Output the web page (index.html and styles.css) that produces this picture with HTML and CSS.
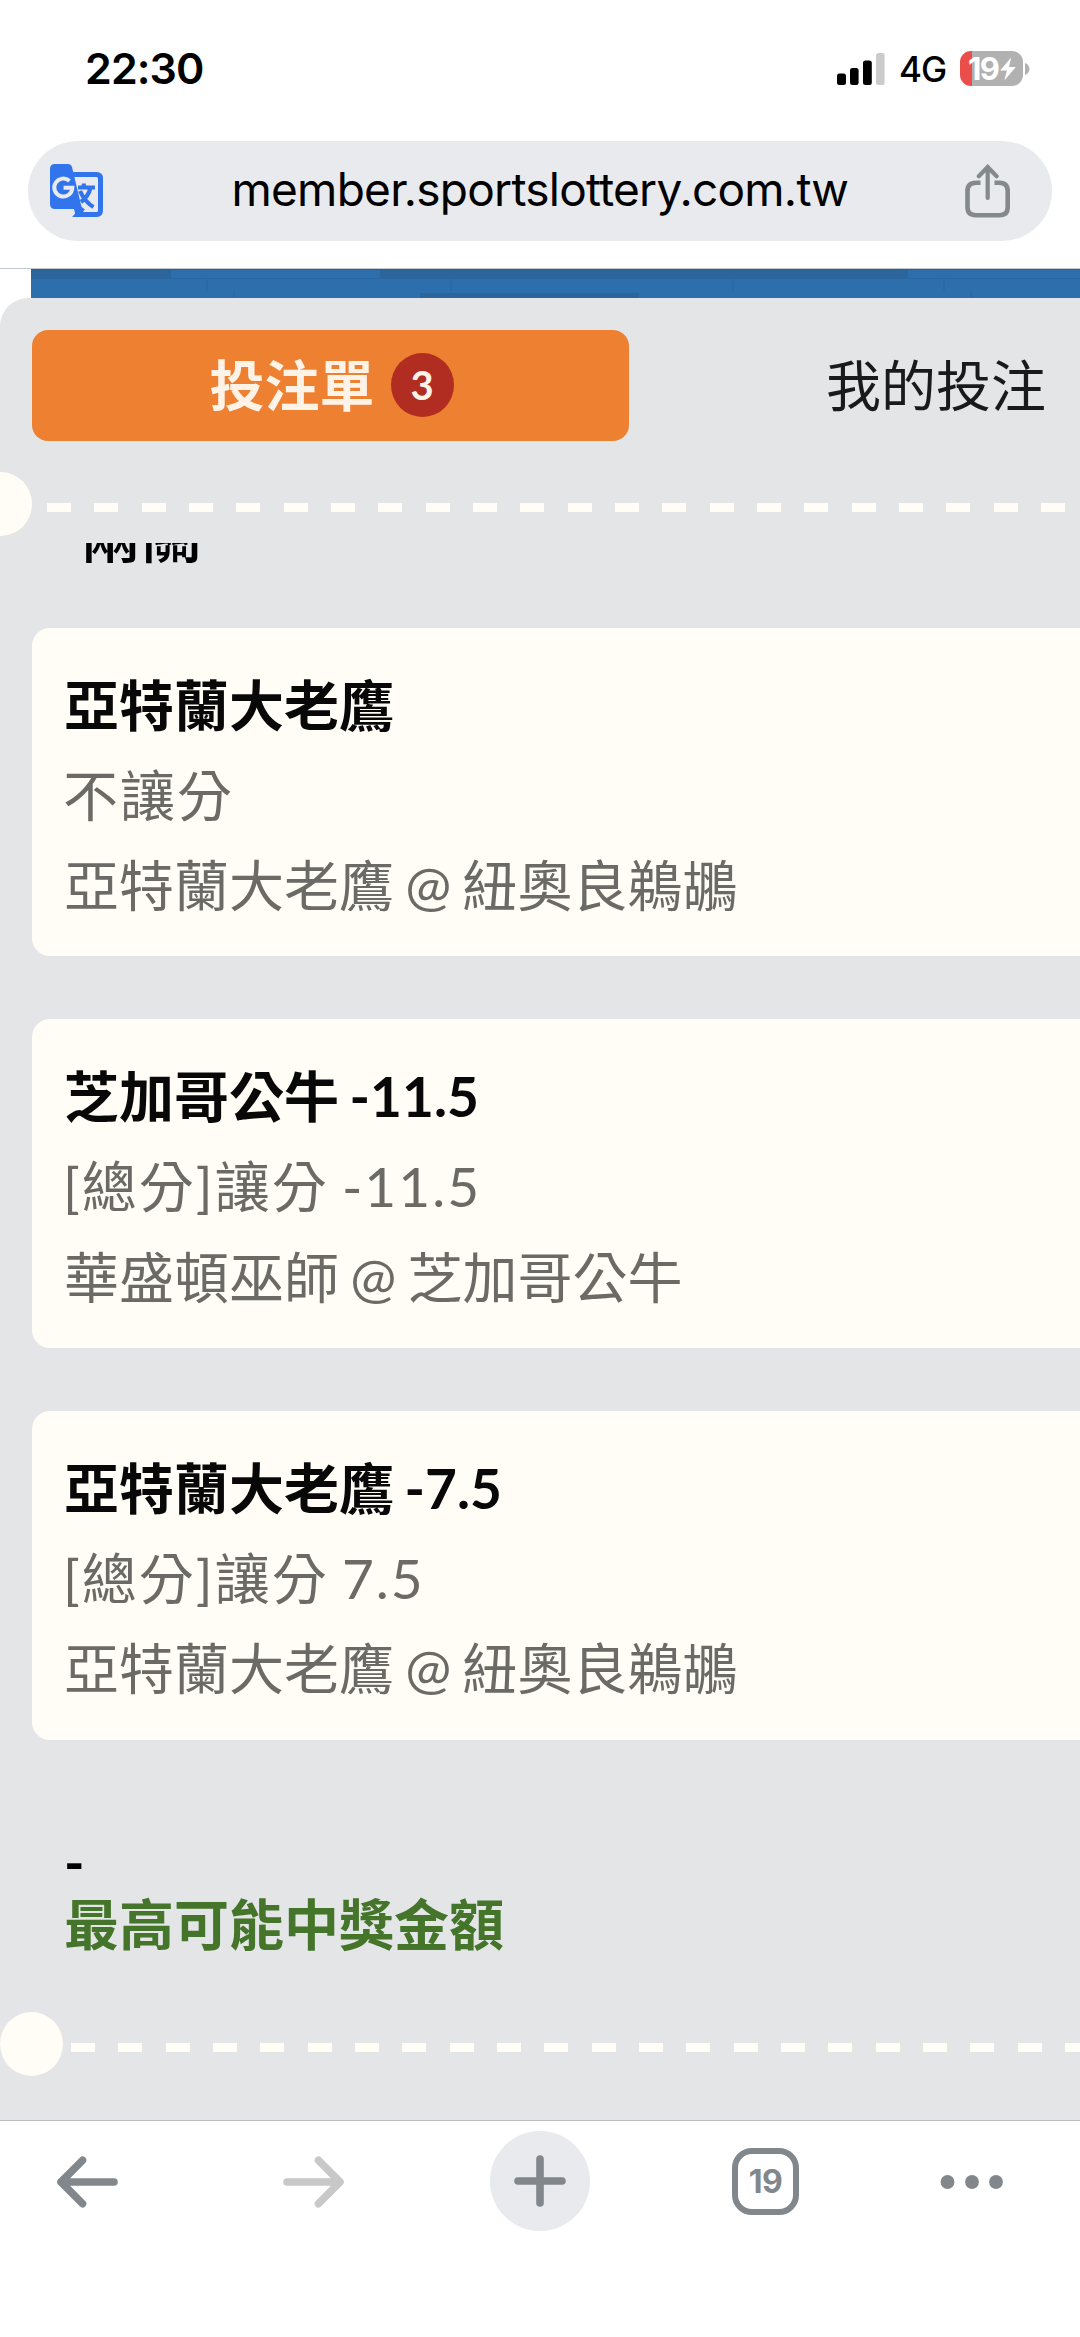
FILE: index.html
```html
<!DOCTYPE html>
<html lang="zh-Hant">
<head>
<meta charset="utf-8">
<title>投注單</title>
<link rel="stylesheet" href="styles.css">
</head>
<body>
<header class="status">
  <span class="time">22:30</span>
  <div class="status-right">
    <svg class="signal" width="48" height="32" viewBox="0 0 48 32">
      <rect x="0" y="20.5" width="9" height="11.5" rx="2.5"/><rect x="13" y="15" width="8.6" height="17" rx="2.5"/><rect x="26" y="7.5" width="8.8" height="24.5" rx="2.5"/><rect x="39" y="0" width="8.6" height="32" rx="2.5" fill="#cbcbcb"/>
    </svg>
    <span class="net">4G</span>
    <div class="battery">
      <span class="level">19</span>
      <svg class="bolt" width="18" height="24" viewBox="0 0 16 23"><path d="M11 0.5 0.5 13H7L4.5 22.5 15.5 9.5H9Z" fill="#fff"/></svg>
    </div>
    <svg class="nub" width="5" height="12" viewBox="0 0 5 12"><path d="M0 0C6 2 6 10 0 12Z" fill="#b1b1b1"/></svg>
  </div>
</header>
<div class="address">
  <svg class="translate" width="53" height="54" viewBox="0 0 53 54">
    <path d="M5 0H18Q21 0 22 3L32 45 31.500 53H28Q26 53 25.500 51L24 45H5Q0 45 0 40V5Q0 0 5 0Z" fill="#3174ec"/>
    <path d="M23 10.500H46.500Q50.500 10.500 50.500 14.500V46.500Q50.500 50.500 46.500 50.500H27.500L33 44" fill="none" stroke="#3174ec" stroke-width="5"/>
    <path d="M28 23.500H45M33.800 19.500V23.500M30 27Q35 38 43.500 43M40.500 24Q38.500 32 31 38" fill="none" stroke="#3174ec" stroke-width="4.200"/>
    <path d="M19.500 17A9 9 0 1 0 22.300 23.700H13.500" fill="none" stroke="#e8eaed" stroke-width="4"/>
  </svg>
  <span class="url">member.sportslottery.com.tw</span>
  <svg class="share" width="46" height="55" viewBox="0 0 46 55" fill="none" stroke="#84898c">
    <path d="M15.500 18.700H11Q2.500 18.700 2.500 27V43Q2.500 51.200 11 51.200H34.500Q42.700 51.200 42.700 43V27Q42.700 18.700 34.500 18.700H29.500" stroke-width="4.600"/>
    <path d="M22.700 34V3.500M13.800 12.200 22.700 3 31.600 12.200" stroke-width="4.200" stroke-linecap="round"/>
  </svg>
</div>
<div class="banner">
  <svg width="1049" height="30" viewBox="0 0 1049 30">
    <rect width="1049" height="30" fill="#2d6eac"/>
    <path d="M0 0H140V9H0ZM349 0H877V9H349ZM389 24H608V30H389Z" fill="#2b659c"/>
    <path d="M0 9.500H1049M176 9V22M420 9V22M702 9V22M913 9V22M203 22V30M940 22V30" stroke="#2a67a1" fill="none"/>
    <path d="M0 .5H1049" stroke="#2b5f94"/>
  </svg>
</div>
<main class="sheet">
  <nav class="tabs">
    <div class="tab active">投注單<span class="badge">3</span></div>
    <div class="tab other">我的投注</div>
  </nav>
  <div class="tear tear-top"><i class="notch"></i><i class="dashes"></i></div>
  <section class="slip">
    <h2 class="parlay">兩關</h2>
    <article class="card"><p class="pick">亞特蘭大老鷹</p><p class="market">不讓分</p><p class="match">亞特蘭大老鷹 @ 紐奧良鵜鶘</p></article>
    <article class="card"><p class="pick">芝加哥公牛 -11.5</p><p class="market">[總分]讓分 -11.5</p><p class="match">華盛頓巫師 @ 芝加哥公牛</p></article>
    <article class="card"><p class="pick">亞特蘭大老鷹 -7.5</p><p class="market">[總分]讓分 7.5</p><p class="match">亞特蘭大老鷹 @ 紐奧良鵜鶘</p></article>
    <div class="payout"><p class="amount">-</p><p class="label">最高可能中獎金額</p></div>
  </section>
  <div class="tear tear-bottom"><i class="notch"></i><i class="dashes"></i></div>
</main>
<footer class="toolbar">
  <svg class="back" width="64" height="54" viewBox="0 0 64 54"><path d="M58 27H5M26.500 5.300 5 27 26.500 48.700"/></svg>
  <svg class="forward" width="64" height="54" viewBox="0 0 64 54"><path d="M6 27H59M37.500 5.300 59 27 37.500 48.700"/></svg>
  <div class="new"><svg width="54" height="54" viewBox="0 0 54 54"><path d="M5 27H49M27 5V49"/></svg></div>
  <div class="count">19</div>
  <svg class="more" width="64" height="14" viewBox="0 0 64 14"><circle cx="7.500" cy="7" r="6.900"/><circle cx="32" cy="7" r="6.900"/><circle cx="56" cy="7" r="6.900"/></svg>
</footer>
</body>
</html>
```
FILE: styles.css
```css
* { box-sizing: border-box; margin: 0; padding: 0; }
body {
  width: 1080px; height: 2337px; overflow: hidden;
  display: flex; flex-direction: column;
  background: #fff; color: #000;
  font-family: Lato, "Noto Sans CJK TC", sans-serif;
}
svg { display: block; flex: none; }

.status {
  height: 141px; padding: 51px 50px 0 85px;
  display: flex; justify-content: space-between; align-items: flex-start;
  font-family: Inter, sans-serif;
}
.time { font-size: 43px; line-height: 35px; font-weight: 600; letter-spacing: -0.9px; }
.status-right { display: flex; height: 35px; align-items: center; }
.net { width: 46px; margin: 2px 15px 0 14px; font-size: 35px; line-height: 35px; font-weight: 500; letter-spacing: -1px; white-space: nowrap; }
.battery {
  width: 63px; height: 35px; border-radius: 11px; padding-left: 8px;
  display: flex; align-items: center;
  background: linear-gradient(90deg, #eb4e4a 12px, #b1b1b1 12px);
  color: #fff; font-size: 31px; line-height: 35px; font-weight: 700; letter-spacing: -1.5px;
}
.level { width: 31px; }
.nub { margin-left: 2px; }

.address {
  height: 100px; margin: 0 28px 27px; padding: 0 41px 0 22px; border-radius: 50px;
  display: flex; align-items: center; justify-content: space-between;
  background: #e8eaed;
}
.url { width: 615px; margin: -5px 0 0 10px; font-family: Inter, sans-serif; font-size: 46px; line-height: 60px; letter-spacing: -0.750px; white-space: nowrap; }

.banner { height: 30px; padding-left: 31px; border-top: 1px solid #c4c9d0; }

.sheet { height: 1822px; background: #e4e5e7; border-radius: 28px 0 0 0; overflow: hidden; padding-top: 32px; }
.tabs { display: flex; padding-left: 31.500px; height: 110.500px; font-size: 55px; }
.tab { display: flex; align-items: center; justify-content: center; line-height: 80px; white-space: nowrap; }
.active { width: 597px; padding: 0 0 1px 3px; border-radius: 16px; background: #ee8131; color: #fff2e6; font-weight: 700; gap: 16px; }
.badge { width: 63px; height: 64px; border-radius: 50%; background: #b12c21; font-size: 40px; line-height: 64px; text-align: center; }
.other { flex: 1; justify-content: flex-end; padding: 0 34px 1px 0; color: #1a1a1a; }

.tear { display: flex; align-items: center; height: 64px; }
.tear-top { margin-top: 31px; }
.notch { flex: none; width: 63px; height: 64px; border-radius: 50%; background: #fffdf6; }
.tear-top .notch { margin-left: -31.500px; }
.dashes { flex: 1; height: 8.500px; margin-top: 8px; background: repeating-linear-gradient(90deg, #fffdf6 0 24px, transparent 24px 47.330px); }
.tear-top .dashes { margin-left: 15.300px; }
.tear-bottom .dashes { margin-left: 8px; }

.slip { height: 1469px; margin-top: 7px; overflow: hidden; }
.parlay { height: 133px; margin-top: -48px; padding-left: 80px; font-size: 61px; line-height: 80px; font-weight: 500; }
.card {
  height: 328.700px; margin: 0 0 63px 31.500px; padding: 32px 0 0 32.500px;
  border-radius: 18px 0 0 18px; background: #fffdf6;
  font-size: 55px; line-height: 90.300px; word-spacing: -2.800px; white-space: nowrap;
}
.pick { color: #080808; font-weight: 700; }
.market { margin-left: -1px; color: #6b6a66; letter-spacing: 2px; }
.match { color: #6b6a66; }
.payout { padding: 28.500px 0 0 64px; font-size: 55px; line-height: 62px; font-weight: 700; }
.label { color: #44752a; }

.toolbar {
  height: 217px; border-top: 1px solid #bbbdc0; padding: 10px 0 0 56px;
  display: flex; align-items: flex-start;
}
.toolbar path { fill: none; stroke: #81878b; stroke-width: 7.600px; stroke-linecap: round; stroke-linejoin: round; }
.back, .forward { margin-top: 24px; }
.forward { margin-left: 161px; }
.toolbar .forward path { stroke: #c8c8c8; }
.new { width: 100px; height: 100px; margin-left: 145px; border-radius: 50%; background: #e8eaed; display: flex; align-items: center; justify-content: center; }
.count {
  width: 67px; height: 67px; margin: 17px 0 0 142px; border: 6.500px solid #81878b; border-radius: 20px;
  color: #81878b; text-align: center; font: 700 32px/55px Inter, sans-serif; letter-spacing: -0.500px;
}
.more { margin: 44px 0 0 140.500px; fill: #81878b; }
```
